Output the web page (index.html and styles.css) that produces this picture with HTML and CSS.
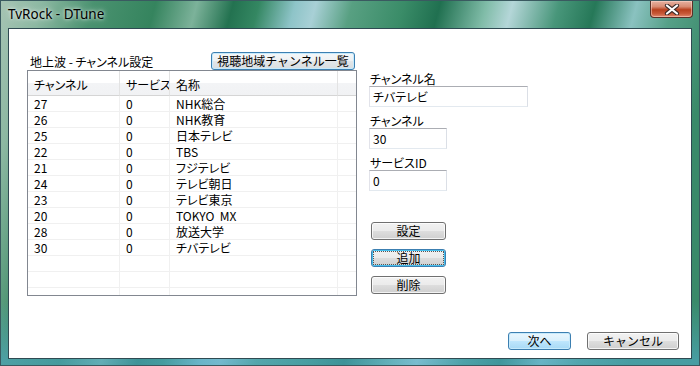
FILE: index.html
```html
<!DOCTYPE html>
<html lang="ja">
<head>
    <meta charset="UTF-8">
    <meta name="viewport" content="width=device-width, initial-scale=1.0">
    <title>TvRock - DTune</title>
    <link rel="stylesheet" href="styles.css">
</head>
<body>
    <div class="window">
        <div class="titlebar">
            <span class="title">TvRock - DTune</span>
            <span class="close">
                <svg width="16" height="11" viewBox="0 0 16 11">
                    <path d="M3 1.5 L13 9.5 M13 1.5 L3 9.5" stroke="#3a2a28" stroke-width="4.2" stroke-linecap="round"/>
                    <path d="M3 1.5 L13 9.5 M13 1.5 L3 9.5" stroke="#ffffff" stroke-width="2.2" stroke-linecap="round"/>
                </svg>
            </span>
        </div>

        <div class="client">
            <div class="main">
                <!-- 左: チャンネル一覧 -->
                <div class="left">
                    <div class="left-head">
                        <span class="caption">地上波 - チャンネル設定</span>
                        <button class="btn btn-blue btn-area">視聴地域チャンネル一覧</button>
                    </div>
                    <div class="list">
                        <table>
                            <thead>
                                <tr>
                                    <th class="c1">チャンネル</th>
                                    <th class="c2">サービス</th>
                                    <th class="c3">名称</th>
                                    <th class="c4"></th>
                                </tr>
                            </thead>
                            <tbody>
                                <tr><td>27</td><td>0</td><td>NHK総合</td><td></td></tr>
                                <tr><td>26</td><td>0</td><td>NHK教育</td><td></td></tr>
                                <tr><td>25</td><td>0</td><td>日本テレビ</td><td></td></tr>
                                <tr><td>22</td><td>0</td><td>TBS</td><td></td></tr>
                                <tr><td>21</td><td>0</td><td>フジテレビ</td><td></td></tr>
                                <tr><td>24</td><td>0</td><td>テレビ朝日</td><td></td></tr>
                                <tr><td>23</td><td>0</td><td>テレビ東京</td><td></td></tr>
                                <tr><td>20</td><td>0</td><td>TOKYO&nbsp;&nbsp;MX</td><td></td></tr>
                                <tr><td>28</td><td>0</td><td>放送大学</td><td></td></tr>
                                <tr><td>30</td><td>0</td><td>チバテレビ</td><td></td></tr>
                                <tr><td></td><td></td><td></td><td></td></tr>
                                <tr><td></td><td></td><td></td><td></td></tr>
                                <tr><td></td><td></td><td></td><td></td></tr>
                            </tbody>
                        </table>
                    </div>
                </div>

                <!-- 右: 編集欄 -->
                <div class="right">
                    <div class="field-label first">チャンネル名</div>
                    <div class="edit edit-wide">チバテレビ</div>
                    <div class="field-label">チャンネル</div>
                    <div class="edit">30</div>
                    <div class="field-label">サービスID</div>
                    <div class="edit">0</div>

                    <div class="actions">
                        <button class="btn btn-small">設定</button>
                        <button class="btn btn-small btn-focus"><span class="focus-rect">追加</span></button>
                        <button class="btn btn-small">削除</button>
                    </div>
                </div>
            </div>

            <div class="footer">
                <button class="btn btn-blue btn-next">次へ</button>
                <button class="btn btn-cancel">キャンセル</button>
            </div>
        </div>
    </div>
</body>
</html>
```

FILE: styles.css
```css
body {
    margin: 0;
    width: 700px;
    height: 366px;
    overflow: hidden;
    font-family: "Noto Sans CJK JP", sans-serif;
    font-size: 12px;
    font-feature-settings: "palt";
    color: #000;
}

/* ウィンドウ枠 */
.window {
    width: 700px;
    height: 366px;
    box-sizing: border-box;
    padding: 0 7px 6px 7px;
    display: flex;
    flex-direction: column;
    background:
        linear-gradient(180deg, rgba(255,255,255,0) 0px, rgba(255,255,255,0) 300px, rgba(80,170,200,0.6) 360px),
        linear-gradient(105deg,
            #a6c4b4 0px, #8cb8a2 40px, #4a9270 90px, #35845e 150px,
            #7cb29a 190px, #237250 225px, #348762 250px, #8ec4c8 285px,
            #a8d0d6 305px, #58a082 340px, #3a8c68 390px, #207050 425px,
            #80bca8 470px, #b4d6d8 495px, #48967a 540px, #267858 575px,
            #8ac2c0 615px, #56a088 650px, #3a8a6a 700px);
    border: 1px solid #3a5a60;
}

.titlebar {
    height: 27px;
    display: flex;
    align-items: flex-start;
    justify-content: space-between;
}

.title {
    font-family: "Noto Sans", sans-serif;
    font-size: 13.5px;
    line-height: 13px;
    margin-top: 7px;
    color: #000;
    text-shadow: 0 0 6px rgba(255,255,255,0.8), 0 0 3px rgba(255,255,255,0.7);
}

.close {
    width: 43px;
    height: 17px;
    margin-right: -1px;
    box-sizing: border-box;
    border: 1px solid #5a3028;
    border-top: none;
    border-radius: 0 0 4px 4px;
    background: linear-gradient(180deg, #e6b2a2 0%, #d88c74 35%, #b8401e 55%, #c85a3a 80%, #e08a70 100%);
    box-shadow: inset 0 0 0 1px rgba(255,220,210,0.5);
    display: flex;
    align-items: center;
    justify-content: center;
}

/* クライアント領域 */
.client {
    flex: 1;
    background: #fff;
    border: 1px solid #2f4a52;
    display: flex;
    flex-direction: column;
    justify-content: space-between;
    padding: 23px 0 8px 0;
}

.main {
    display: flex;
    align-items: flex-start;
    padding-left: 18px;
}

.left {
    width: 330px;
}

.left-head {
    display: flex;
    align-items: center;
    height: 18px;
}

.caption {
    padding-left: 3px;
    line-height: 14px;
    margin-top: 1px;
}

.btn-area {
    margin-left: auto;
    margin-right: 2px;
    width: 144px;
}

/* リストビュー */
.list {
    height: 226px;
    box-sizing: border-box;
    border: 1px solid #828790;
    overflow: hidden;
}

.list table {
    width: 328px;
    table-layout: fixed;
    border-spacing: 0;
}

.list th,
.list td {
    box-sizing: border-box;
    padding: 0 0 0 6px;
    text-align: left;
    font-weight: normal;
    white-space: nowrap;
    overflow: hidden;
}

.list th {
    height: 25px;
    padding-top: 3px;
    border-bottom: 1px solid #d5d5d5;
    border-right: 1px solid #e3e3e3;
    background: linear-gradient(180deg, #ffffff 0%, #ffffff 50%, #f3f4f6 52%, #f1f2f4 100%);
}

.list th.c4 {
    border-right: none;
}

.c1 { width: 92px; }
.c2 { width: 50px; }
.c3 { width: 168px; }
.c4 { width: 18px; }

.list td {
    height: 16px;
    line-height: 15px;
    border-bottom: 1px solid #f0f0f0;
    border-right: 1px solid #f0f0f0;
}

.list td:last-child {
    border-right: none;
}

/* 右側 */
.right {
    margin-left: 12px;
    display: flex;
    flex-direction: column;
    align-items: flex-start;
}

.field-label {
    height: 14px;
    line-height: 14px;
    margin-top: 7px;
    padding-left: 1px;
}

.field-label.first {
    margin-top: 20px;
}

.edit {
    width: 78px;
    height: 21px;
    box-sizing: border-box;
    border: 1px solid #e3e9ef;
    border-top-color: #abadb3;
    border-left-color: #e2e3ea;
    border-right-color: #dbdfe6;
    padding: 0 3px;
    line-height: 19px;
}

.edit-wide {
    width: 159px;
}

.actions {
    margin-top: 31px;
    margin-left: 2px;
    display: flex;
    flex-direction: column;
    gap: 9px;
}

/* ボタン */
.btn {
    height: 18px;
    box-sizing: border-box;
    padding: 0;
    font-family: inherit;
    font-size: 12px;
    line-height: 14px;
    color: #000;
    border: 1px solid #707070;
    border-radius: 3px;
    background: linear-gradient(180deg, #f2f2f2 0%, #ebebeb 48%, #dddddd 52%, #cfcfcf 100%);
    box-shadow: inset 0 0 0 1px rgba(255,255,255,0.75);
}

.btn-blue {
    border-color: #3c7fb1;
    background: linear-gradient(180deg, #eaf6fd 0%, #d9f0fc 48%, #bee6fd 52%, #a7d9f5 100%);
    box-shadow: inset 0 0 0 1px #c6eafc;
}

.btn-area {
    background: linear-gradient(180deg, #f4f7f9 0%, #eef1f3 48%, #e2e6e9 52%, #d8dde0 100%);
}

.btn-small {
    width: 75px;
}

.btn-focus {
    border-color: #3c7fb1;
    box-shadow: inset 0 0 0 1px #48c0ee;
    padding: 1px;
}

.focus-rect {
    display: block;
    height: 100%;
    box-sizing: border-box;
    border: 1px dotted #555;
    line-height: 12px;
}

.footer {
    display: flex;
    justify-content: flex-end;
    gap: 16px;
    padding-right: 12px;
}

.btn-next {
    width: 63px;
}

.btn-cancel {
    width: 92px;
}
```
